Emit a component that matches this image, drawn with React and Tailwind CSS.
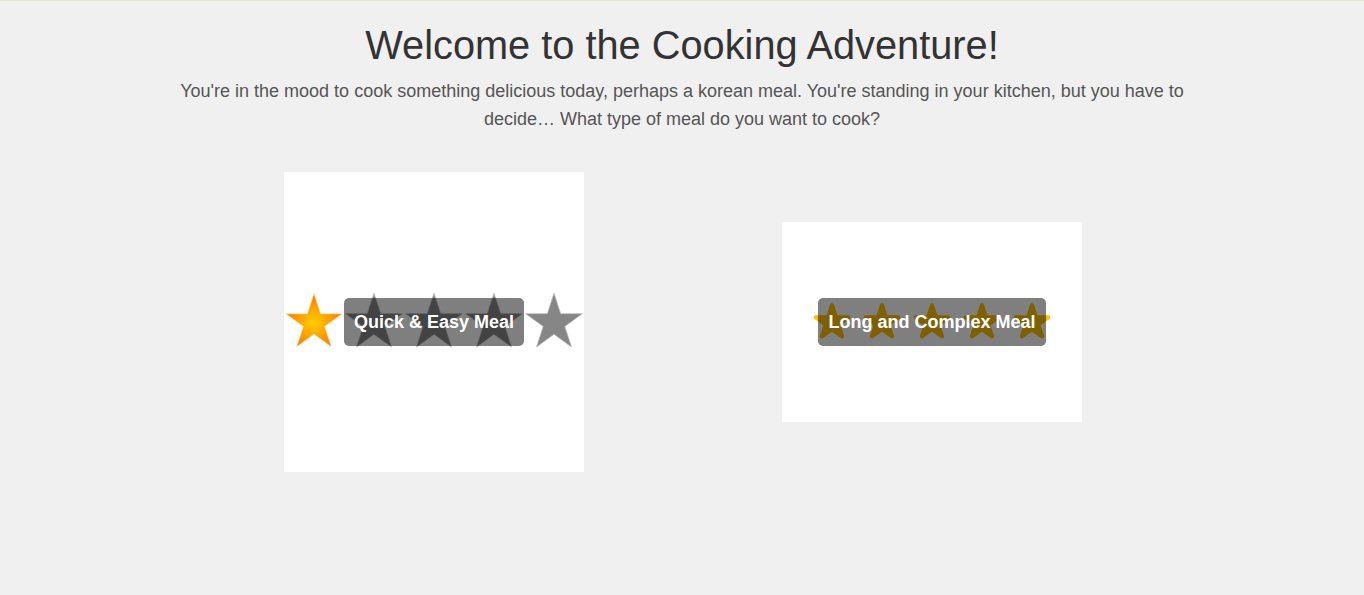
const starPoints = (() => {
  const cx = 50
  const R = 49.5
  const cy = 2 + R
  const r = R * 0.382
  const pts = []
  for (let i = 0; i < 10; i++) {
    const rad = i % 2 === 0 ? R : r
    const a = (Math.PI / 5) * i - Math.PI / 2
    pts.push(`${(cx + rad * Math.cos(a)).toFixed(2)},${(cy + rad * Math.sin(a)).toFixed(2)}`)
  }
  return pts.join(' ')
})()

const BigStar = ({ filled }) => (
  <svg viewBox="0 0 100 100" className="w-[60px] h-[60px] shrink-0">
    <defs>
      <radialGradient id="gold" cx="50%" cy="55%" r="50%">
        <stop offset="0%" stopColor="#ffcf00" />
        <stop offset="50%" stopColor="#ffa500" />
        <stop offset="100%" stopColor="#ff7a00" />
      </radialGradient>
    </defs>
    <polygon
      points={starPoints}
      fill={filled ? 'url(#gold)' : '#868686'}
      stroke={filled ? '#ffe9c0' : '#b5b5b5'}
      strokeWidth="1.2"
      strokeLinejoin="round"
    />
  </svg>
)

const SmallStar = () => (
  <div className="w-[50px] flex justify-center shrink-0">
    <svg viewBox="-8 -8 116 116" className="w-[40px] h-[40px]">
      <polygon
        points={starPoints}
        fill="#ffbe00"
        stroke="#ffbe00"
        strokeWidth="12"
        strokeLinejoin="round"
      />
    </svg>
  </div>
)

const MealCard = ({ size, label, children }) => (
  <div className={`${size} bg-white flex items-center justify-center relative shrink-0 cursor-pointer`}>
    <div className="flex items-center">{children}</div>
    <div className="absolute inset-0 flex items-center justify-center">
      <span className="bg-black/50 text-white font-bold text-[18px] leading-6 px-[10px] py-3 rounded-[5px] whitespace-nowrap">
        {label}
      </span>
    </div>
  </div>
)

export default function App() {
  return (
    <div
      className="min-h-[595px] bg-[#f0f0f0] border-t border-[#e4e4d8] flex flex-col items-center"
      style={{ fontFamily: '"Liberation Sans", Arial, sans-serif' }}
    >
      <h1 className="text-[39.75px] leading-[48px] text-[#333] mt-[20px]">
        Welcome to the Cooking Adventure!
      </h1>
      <p className="max-w-[1024px] text-center text-[18px] leading-[28px] text-[#555] mt-[8px]">
        You're in the mood to cook something delicious today, perhaps a korean meal. You're standing in your kitchen, but you have to decide… What type of meal do you want to cook?
      </p>
      <div className="flex items-center justify-center gap-[198px] mt-[39px] ml-[2px]">
        <MealCard size="w-[300px] h-[300px]" label="Quick & Easy Meal">
          <BigStar filled />
          <BigStar />
          <BigStar />
          <BigStar />
          <BigStar />
        </MealCard>
        <MealCard size="w-[300px] h-[200px]" label="Long and Complex Meal">
          <SmallStar />
          <SmallStar />
          <SmallStar />
          <SmallStar />
          <SmallStar />
        </MealCard>
      </div>
    </div>
  )
}
